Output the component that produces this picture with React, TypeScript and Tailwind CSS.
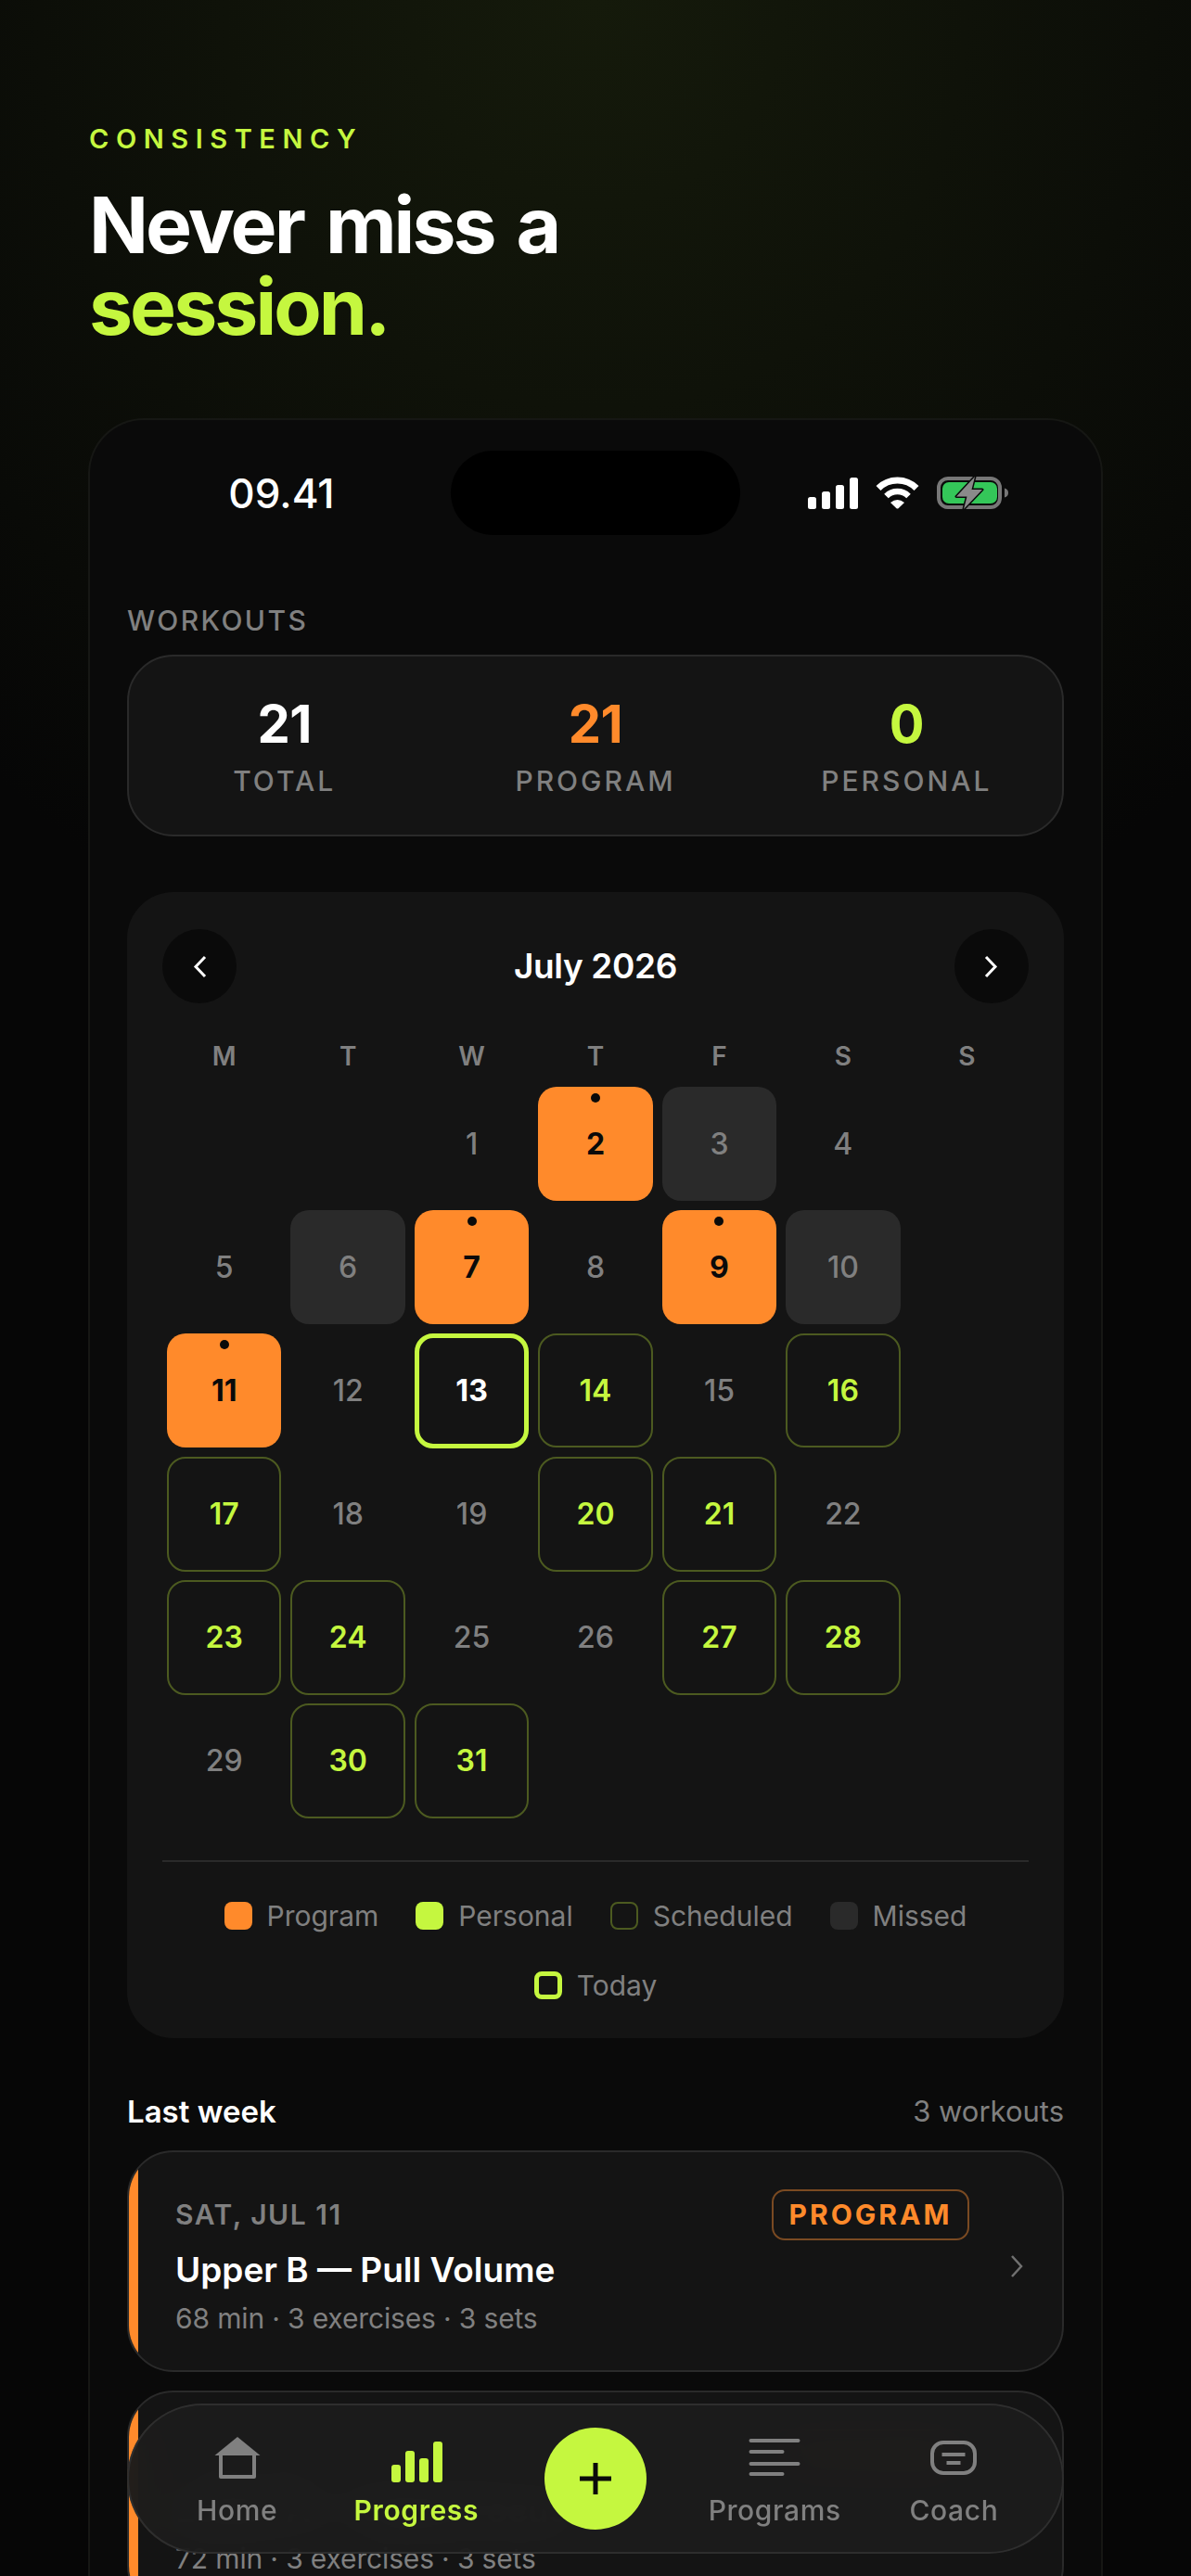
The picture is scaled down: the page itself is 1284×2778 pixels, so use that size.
import { ReactNode } from 'react';

type DayKind = 'plain' | 'program' | 'missed' | 'scheduled' | 'today' | 'blank';

const weekdays = ['M', 'T', 'W', 'T', 'F', 'S', 'S'];

const days: { label?: number; kind: DayKind }[] = [
  { kind: 'blank' }, { kind: 'blank' }, { label: 1, kind: 'plain' }, { label: 2, kind: 'program' }, { label: 3, kind: 'missed' }, { label: 4, kind: 'plain' }, { kind: 'blank' },
  { label: 5, kind: 'plain' }, { label: 6, kind: 'missed' }, { label: 7, kind: 'program' }, { label: 8, kind: 'plain' }, { label: 9, kind: 'program' }, { label: 10, kind: 'missed' }, { kind: 'blank' },
  { label: 11, kind: 'program' }, { label: 12, kind: 'plain' }, { label: 13, kind: 'today' }, { label: 14, kind: 'scheduled' }, { label: 15, kind: 'plain' }, { label: 16, kind: 'scheduled' }, { kind: 'blank' },
  { label: 17, kind: 'scheduled' }, { label: 18, kind: 'plain' }, { label: 19, kind: 'plain' }, { label: 20, kind: 'scheduled' }, { label: 21, kind: 'scheduled' }, { label: 22, kind: 'plain' }, { kind: 'blank' },
  { label: 23, kind: 'scheduled' }, { label: 24, kind: 'scheduled' }, { label: 25, kind: 'plain' }, { label: 26, kind: 'plain' }, { label: 27, kind: 'scheduled' }, { label: 28, kind: 'scheduled' }, { kind: 'blank' },
  { label: 29, kind: 'plain' }, { label: 30, kind: 'scheduled' }, { label: 31, kind: 'scheduled' },
];

const dayStyles: Record<DayKind, string> = {
  blank: '',
  plain: 'text-[#808080] font-medium',
  program: 'bg-[#ff8a2b] text-[#0a0a0a] font-bold',
  missed: 'bg-[#2a2a2a] text-[#808080] font-medium',
  scheduled: 'border-2 border-[#4c5a20] text-[#c5f73f] font-semibold',
  today: 'border-[5px] border-[#c5f73f] text-white font-bold',
};

function DayCell({ label, kind }: { label?: number; kind: DayKind }) {
  return (
    <div className={`relative aspect-square rounded-[20px] flex items-center justify-center text-[32px] ${dayStyles[kind]}`}>
      {kind === 'program' && <span className="absolute top-[7px] left-1/2 -translate-x-1/2 w-[10px] h-[10px] rounded-full bg-[#0a0a0a]" />}
      {label}
    </div>
  );
}

function LegendItem({ swatch, label }: { swatch: string; label: string }) {
  return (
    <div className="flex items-center gap-[16px] h-[34px]">
      <span className={`w-[30px] h-[30px] rounded-[8px] ${swatch}`} />
      <span className="text-[30px] leading-[34px] text-[#808080]">{label}</span>
    </div>
  );
}

function Stat({ value, label, color }: { value: string; label: string; color: string }) {
  return (
    <div className="flex flex-col items-center">
      <span className={`text-[56px] leading-[65px] font-bold tracking-[-0.01em] ${color}`}>{value}</span>
      <span className="mt-[11px] text-[30px] leading-[34px] font-medium tracking-[0.1em] text-[#808080]">{label}</span>
    </div>
  );
}

function WorkoutCard({ date, title, meta }: { date: string; title: string; meta: string }) {
  return (
    <div className="relative overflow-hidden flex items-center rounded-[50px] border-2 border-[#2a2a2a] bg-[#141414] pl-[50px] pr-[42px] pt-[40px] pb-[38px]">
      <span className="absolute left-0 top-0 bottom-0 w-[10px] bg-[#ff8a2b]" />
      <div className="flex-1 min-w-0">
        <div className="flex items-center justify-between h-[55px]">
          <span className="text-[30px] font-semibold tracking-[0.05em] text-[#808080]">{date}</span>
          <span className="flex items-center justify-center w-[213px] h-[55px] rounded-[14px] border-2 border-[#7a4a22] text-[30px] font-bold tracking-[0.1em] text-[#ff8a2b]">PROGRAM</span>
        </div>
        <div className="mt-[10px] text-[37px] leading-[44px] font-semibold text-white">{title}</div>
        <div className="mt-[12px] text-[30px] leading-[36px] tracking-[-0.005em] text-[#808080]">{meta}</div>
      </div>
      <svg className="ml-[44px] mt-[10px] shrink-0" width="14" height="26" viewBox="0 0 14 26" fill="none" stroke="#707070" strokeWidth="2.5">
        <path d="M2 2l10 11L2 24" />
      </svg>
    </div>
  );
}

function NavButton({ children }: { children: ReactNode }) {
  return (
    <div className="w-[80px] h-[80px] rounded-full bg-[#0a0a0a] flex items-center justify-center">{children}</div>
  );
}

function NavItem({ label, active, icon }: { label: string; active?: boolean; icon: ReactNode }) {
  return (
    <div className="flex flex-col items-center pt-[7px]">
      <div className="h-[50px]">{icon}</div>
      <span className={`mt-[11px] text-[30px] leading-[36px] tracking-[0.02em] ${active ? 'font-semibold text-[#c5f73f]' : 'font-medium text-[#808080]'}`}>{label}</span>
    </div>
  );
}

function StatusIcons() {
  return (
    <div className="flex items-center gap-[19px]">
      <svg width="54" height="34" viewBox="0 0 54 34" fill="#fff">
        <rect x="0" y="21" width="9" height="13" rx="2.5" />
        <rect x="15" y="15" width="9" height="19" rx="2.5" />
        <rect x="30" y="8" width="9" height="26" rx="2.5" />
        <rect x="45" y="0" width="9" height="34" rx="2.5" />
      </svg>
      <svg width="47" height="35" viewBox="0 0 47 35" fill="none" stroke="#fff">
        <path d="M3 12.5A29 29 0 0 1 44 12.5" strokeWidth="7" />
        <path d="M11.5 21A17 17 0 0 1 35.5 21" strokeWidth="6.5" />
        <path d="M16 28Q23.5 22 31 28L24.5 34.2Q23.5 35 22.5 34.2Z" fill="#fff" stroke="none" />
      </svg>
      <svg width="77" height="37" viewBox="0 0 77 37">
        <rect x="2" y="3" width="66" height="31" rx="10" fill="none" stroke="#777" strokeWidth="4" />
        <rect x="6" y="7" width="59" height="23" rx="7" fill="#34c759" />
        <path d="M73 13.5q4 1 4 5t-4 5z" fill="#777" />
        <path d="M41 1L21 22.5H32.5L29 36L49 15H37.5Z" fill="#8a8a8a" stroke="#0a0a0a" strokeWidth="3" paintOrder="stroke" strokeLinejoin="round" />
      </svg>
    </div>
  );
}

export default function App() {
  return (
    <div className="relative h-[2778px] overflow-hidden bg-[#060606] bg-[radial-gradient(ellipse_1000px_1100px_at_50%_0%,#151a0b_0%,#060606_100%)] [font-family:Inter,sans-serif] text-white">
      <div className="px-[96px] pt-[133px]">
        <div className="text-[29px] leading-[34px] font-semibold tracking-[0.26em] text-[#c5f73f]">CONSISTENCY</div>
        <h1 className="mt-[32px] text-[84px] leading-[88px] font-bold tracking-[-0.035em] [word-spacing:7px]">
          Never miss a
          <br />
          <span className="text-[#c5f73f]">session.</span>
        </h1>

        <div className="mt-[76px] -mx-[1px] rounded-t-[60px] border-2 border-b-0 border-[#161714] bg-[#0a0a0a] px-[40px] pt-[33px]">
          {/* status bar */}
          <div className="-mx-[40px] grid grid-cols-[1fr_312px_1fr] items-center">
            <div className="pl-[24px] text-center text-[44px] font-medium">09.41</div>
            <div className="h-[91px] rounded-[46px] bg-black" />
            <div className="pr-[28px] flex justify-center"><StatusIcons /></div>
          </div>

          <div className="mt-[75px] text-[30px] leading-[34px] font-medium tracking-[0.08em] text-[#808080]">WORKOUTS</div>
          <div className="mt-[20px] grid grid-cols-3 rounded-[50px] border-2 border-[#2a2a2a] bg-[#141414] py-[41px]">
            <Stat value="21" label="TOTAL" color="text-white" />
            <Stat value="21" label="PROGRAM" color="text-[#ff8a2b]" />
            <Stat value="0" label="PERSONAL" color="text-[#c5f73f]" />
          </div>

          {/* calendar */}
          <div className="mt-[60px] rounded-[50px] bg-[#141414] px-[38px] pt-[40px] pb-[40px]">
            <div className="flex items-center justify-between">
              <NavButton>
                <svg width="15" height="25" viewBox="0 0 15 25" fill="none" stroke="#fff" strokeWidth="3"><path d="M13 2L3 12.5 13 23" /></svg>
              </NavButton>
              <span className="text-[37px] font-semibold tracking-[-0.01em]">July 2026</span>
              <NavButton>
                <svg width="15" height="25" viewBox="0 0 15 25" fill="none" stroke="#fff" strokeWidth="3"><path d="M2 2l10 10.5L2 23" /></svg>
              </NavButton>
            </div>
            <div className="mt-[40px] px-[5px] grid grid-cols-7 gap-x-[10px]">
              {weekdays.map((d, i) => (
                <div key={i} className="text-center text-[28px] leading-[34px] font-semibold text-[#808080]">{d}</div>
              ))}
            </div>
            <div className="mt-[16px] px-[5px] grid grid-cols-7 gap-x-[10px] gap-y-[9.6px]">
              {days.map((d, i) => (
                <DayCell key={i} label={d.label} kind={d.kind} />
              ))}
            </div>
            <div className="mt-[45px] h-[2px] bg-[#2a2a2a]" />
            <div className="mt-[41px] flex flex-wrap justify-center gap-x-[40px] gap-y-[41px]">
              <LegendItem swatch="bg-[#ff8a2b]" label="Program" />
              <LegendItem swatch="bg-[#c5f73f]" label="Personal" />
              <LegendItem swatch="border-2 border-[#4c5a20]" label="Scheduled" />
              <LegendItem swatch="bg-[#2a2a2a]" label="Missed" />
              <LegendItem swatch="border-[5px] border-[#c5f73f]" label="Today" />
            </div>
          </div>

          {/* last week */}
          <div className="mt-[60px] flex items-center justify-between">
            <span className="text-[33px] leading-[38px] font-semibold">Last week</span>
            <span className="text-[31px] leading-[38px] text-[#808080]">3 workouts</span>
          </div>
          <div className="mt-[23px] flex flex-col gap-[20px]">
            <WorkoutCard date="SAT, JUL 11" title="Upper B — Pull Volume" meta="68 min · 3 exercises · 3 sets" />
            <WorkoutCard date="THU, JUL 9" title="Lower A — Squat Focus" meta="72 min · 3 exercises · 3 sets" />
          </div>
        </div>
      </div>

      {/* floating tab bar */}
      <div className="absolute left-[137px] bottom-[24px] w-[1010px] h-[162px] rounded-[81px] border-2 border-[#2e2e2e] bg-[#1b1b1b]/95 backdrop-blur-xl px-[20px] grid grid-cols-5 items-center">
        <NavItem
          label="Home"
          icon={
            <svg width="60" height="50" viewBox="0 0 60 50">
              <path d="M30 0L54.5 20H5.5Z" fill="#808080" />
              <rect x="12" y="18" width="36" height="25" fill="none" stroke="#808080" strokeWidth="4" strokeLinejoin="round" />
            </svg>
          }
        />
        <NavItem
          label="Progress"
          active
          icon={
            <svg width="60" height="50" viewBox="0 0 60 50" fill="#c5f73f">
              <rect x="3" y="30" width="10" height="19" rx="3" />
              <rect x="18" y="15" width="10" height="34" rx="3" />
              <rect x="33" y="23" width="10" height="26" rx="3" />
              <rect x="48" y="5" width="10" height="44" rx="3" />
            </svg>
          }
        />
        <div className="flex justify-center">
          <div className="w-[110px] h-[110px] rounded-full bg-[#c5f73f] flex items-center justify-center">
            <svg width="36" height="36" viewBox="0 0 36 36" stroke="#0a0a0a" strokeWidth="5"><path d="M18 1v34M1 18h34" /></svg>
          </div>
        </div>
        <NavItem
          label="Programs"
          icon={
            <svg width="60" height="50" viewBox="0 0 60 50" fill="none" stroke="#808080" strokeWidth="4" strokeLinecap="round">
              <path d="M4.5 4h51M4.5 16h34M4.5 29h51M4.5 40h34" />
            </svg>
          }
        />
        <NavItem
          label="Coach"
          icon={
            <svg width="60" height="50" viewBox="0 0 60 50" fill="none" stroke="#808080" strokeWidth="4">
              <rect x="7" y="6" width="46" height="33" rx="12" />
              <path d="M17.5 19h25M22.5 28h15" />
            </svg>
          }
        />
      </div>
    </div>
  );
}
